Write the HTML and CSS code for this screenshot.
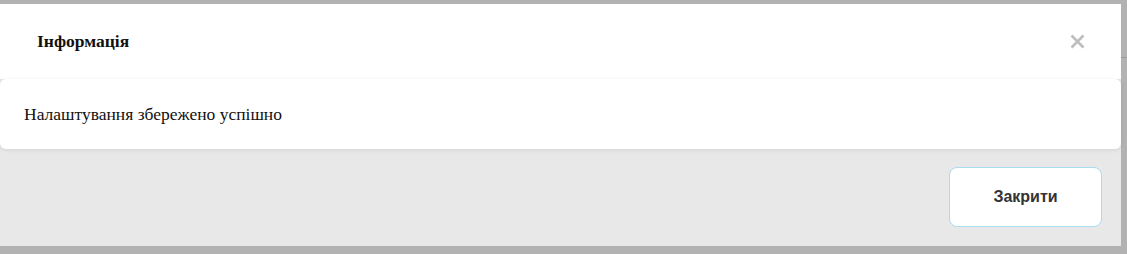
FILE: index.html
```html
<!DOCTYPE html>
<html lang="uk">
<head>
<meta charset="utf-8">
<title>Інформація</title>
<link rel="stylesheet" href="styles.css">
</head>
<body>
<div class="page">
  <div class="dialog">
    <div class="header">
      <h2 class="title">Інформація</h2>
      <button class="close" aria-label="close">
        <svg width="15" height="15" viewBox="0 0 15 15"><path d="M1.5 1.5L13.5 13.5M13.5 1.5L1.5 13.5" stroke="#bdbdbd" stroke-width="2.6" fill="none"/></svg>
      </button>
    </div>
    <div class="body">Налаштування збережено успішно</div>
    <div class="footer">
      <button class="btn">Закрити</button>
    </div>
  </div>
  <div class="side"><div class="side-line"></div></div>
</div>
</body>
</html>
```

FILE: styles.css
```css
html, body {
  margin: 0;
  padding: 0;
}
body {
  background: #b2b2b2;
  width: 1127px;
  height: 254px;
  overflow: hidden;
}
.page {
  display: flex;
  padding-top: 4px;
}
.dialog {
  width: 1121px;
  height: 242px;
  background: #e8e8e8;
  display: flex;
  flex-direction: column;
}
.side {
  width: 6px;
  padding-top: 53px;
}
.side-line {
  height: 1px;
  background: #9a9a9a;
}
.header {
  height: 75px;
  background: #fff;
  display: flex;
  align-items: center;
  justify-content: space-between;
  padding: 0 36px 0 37px;
  box-sizing: border-box;
}
.title {
  margin: 0;
  font-family: "Liberation Serif", "Times New Roman", serif;
  font-size: 17.5px;
  font-weight: bold;
  color: #111;
}
.close {
  border: 0;
  background: none;
  padding: 0;
  width: 15px;
  height: 15px;
  display: flex;
  cursor: pointer;
}
.body {
  position: relative;
  height: 70px;
  background: #fff;
  border-radius: 6px;
  box-shadow: 0 1px 4px rgba(0, 0, 0, 0.09);
  display: flex;
  align-items: center;
  padding-left: 24px;
  box-sizing: border-box;
  font-family: "Liberation Serif", "Times New Roman", serif;
  font-size: 17.5px;
  color: #111;
}
.footer {
  flex: 1;
  display: flex;
  justify-content: flex-end;
  align-items: flex-start;
  padding: 18px 19px 0 0;
}
.btn {
  width: 153px;
  height: 60px;
  background: #fff;
  border: 1px solid #a9dcef;
  border-radius: 8px;
  font-family: "Liberation Sans", Arial, sans-serif;
  font-size: 16px;
  font-weight: bold;
  color: #333;
  cursor: pointer;
}
```
